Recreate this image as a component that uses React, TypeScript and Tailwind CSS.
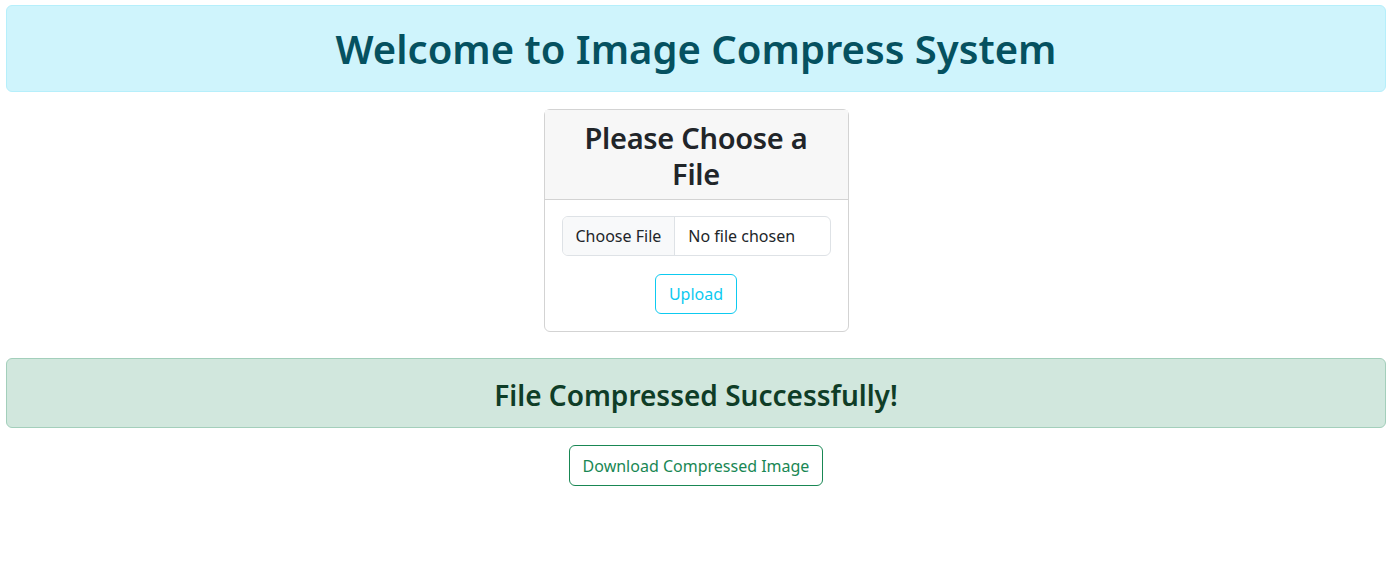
export default function App() {
  return (
    <div className="min-h-[575px] bg-white pl-[6px] pr-[10px] pt-[5px] text-[#212529] font-['Noto_Sans',sans-serif]">
      <div className="rounded-md border border-[#b6effb] bg-[#cff4fc] pt-[17px] pb-[16px] text-center">
        <h1 className="text-[40px] leading-[52px] font-semibold text-[#055160]">
          Welcome to Image Compress System
        </h1>
      </div>

      <div className="mt-[17px] flex justify-center">
        <div className="w-[305px] rounded-md border border-[#d3d3d3] bg-white">
          <div className="border-b border-[#d3d3d3] bg-[#f7f7f7] px-4 pt-[10px] pb-[7px] text-center">
            <h2 className="text-[29px] leading-[36px] font-semibold tracking-[-0.3px]">Please Choose a File</h2>
          </div>
          <form className="flex flex-col items-center px-[17px] pt-4 pb-[17px]">
            <label className="flex h-[40px] w-full cursor-pointer overflow-hidden rounded-md border border-[#dee2e6] text-[16px]">
              <input type="file" name="image" className="hidden" />
              <span className="flex items-center border-r border-[#dee2e6] bg-[#f8f9fa] px-[13px]">Choose File</span>
              <span className="flex items-center px-[13px]">No file chosen</span>
            </label>
            <button
              type="submit"
              className="mt-[18px] h-[40px] rounded-md border border-[#0dcaf0] px-[13px] text-[16px] text-[#0dcaf0]"
            >
              Upload
            </button>
          </form>
        </div>
      </div>

      <div className="mt-[26px] rounded-md border border-[#a3cfbb] bg-[#d1e7dd] pt-[18px] pb-[14px] text-center">
        <h3 className="text-[28px] leading-[36px] font-semibold text-[#0f3d27]">File Compressed Successfully!</h3>
      </div>

      <div className="mt-[17px] flex justify-center">
        <a
          href="#"
          className="flex h-[41px] items-center rounded-md border border-[#198754] px-[13px] text-[16px] text-[#198754]"
        >
          Download Compressed Image
        </a>
      </div>
    </div>
  );
}
